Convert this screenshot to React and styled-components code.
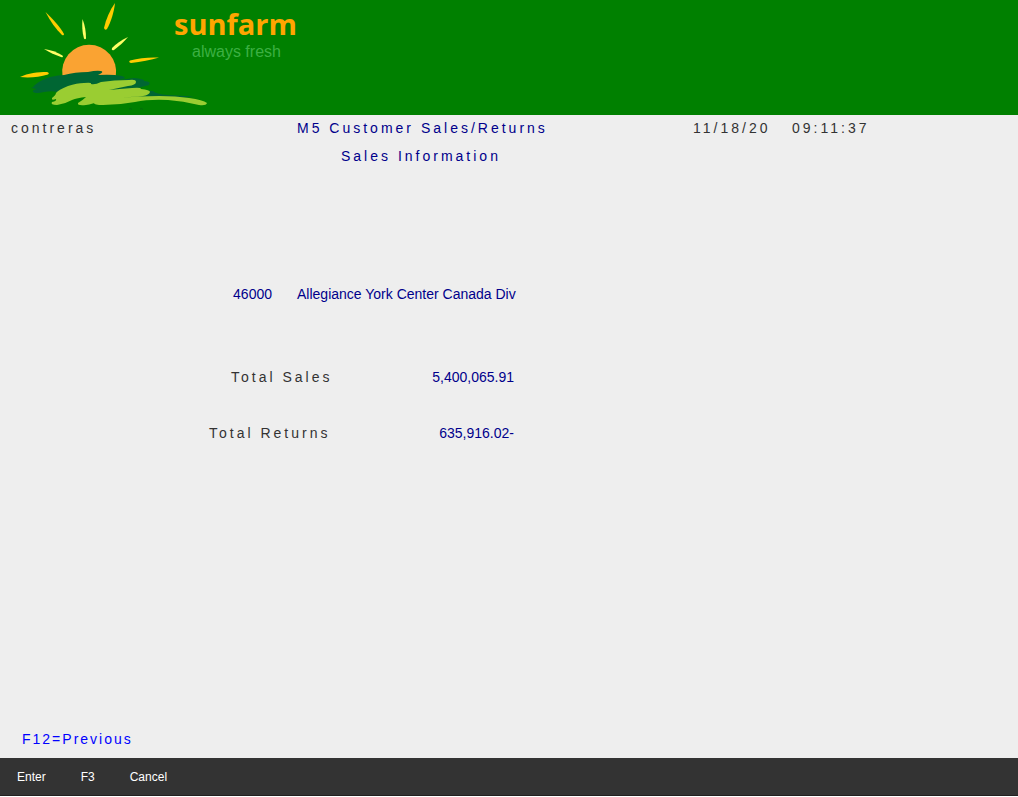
import React from "react";
import styled, { createGlobalStyle } from "styled-components";

const GlobalStyle = createGlobalStyle`
  * { box-sizing: border-box; }
  body {
    margin: 0;
    background: #ffffff;
    font-family: "Liberation Sans", Arial, sans-serif;
    font-size: 14px;
    line-height: 26px;
  }
`;

const Page = styled.div`
  min-height: calc(100vh - 1px);
  background: #eeeeee;
  display: flex;
  flex-direction: column;
`;

const Banner = styled.header`
  height: 115px;
  padding: 0 20px;
  background: #008000;
  display: flex;
  align-items: flex-start;
`;

const SunLogo = styled.svg`
  width: 190px;
  height: 115px;
  flex: none;
`;

const Brand = styled.div`
  margin-left: -36px;
  padding-top: 4px;
`;

const BrandName = styled.div`
  color: #ffa500;
  font-family: "Open Sans", sans-serif;
  font-size: 29px;
  font-weight: 700;
  line-height: 40px;
`;

const Tagline = styled.div`
  padding-left: 18px;
  color: #3cb043;
  font-size: 16px;
  line-height: 16px;
`;

const Screen = styled.main`
  flex: 1;
  display: flex;
  flex-direction: column;
  padding-bottom: 5px;
`;

const Line = styled.div`
  display: grid;
  grid-template-columns: repeat(auto-fill, 11px);
  height: 28px;
  margin-top: ${(p) => p.$before || 0}px;
  white-space: nowrap;
`;

const Field = styled.span`
  grid-column: ${(p) => p.$col} / span ${(p) => p.$span};
  color: ${(p) => p.$color || "#333333"};
`;

const Caption = styled(Field)`
  letter-spacing: 3px;
`;

const Heading = styled(Caption).attrs({ as: "h1" })`
  margin: 0;
  font-size: inherit;
  font-weight: 400;
`;

const Amount = styled(Field)`
  padding-right: 3px;
  text-align: right;
`;

const PromptLine = styled(Line)`
  margin-top: auto;
`;

const PromptButton = styled.button`
  grid-column: 3 / span 12;
  padding: 0;
  border: 0;
  background: none;
  color: #0000ff;
  font: inherit;
  letter-spacing: 2px;
  text-align: left;
  cursor: pointer;
`;

const KeyBar = styled.footer`
  height: 38px;
  padding: 0 17px;
  background: #333333;
  border-bottom: 1px solid #231f20;
  display: flex;
  align-items: center;
  gap: 35px;
`;

const KeyButton = styled.button`
  padding: 0;
  border: 0;
  background: none;
  color: #ffffff;
  font: inherit;
  font-size: 12px;
  cursor: pointer;
`;

const navy = "#00008b";

function Logo() {
  return (
    <SunLogo viewBox="20 0 190 115" role="img" aria-label="Sun rising over fields">
      <g fill="#ffcc00">
        <path d="M45.500 12C53 19 60 27 64 34Q64 36 62 35C56 29 50 21 45.500 12Z" />
        <path d="M115 3C114 12 111 22 107 29Q105 31 104 28C106 19 110 10 115 3Z" />
        <path d="M20 77C28 73 38 72 47 72Q50 73 48 74.500C39 77 30 78 20 77Z" />
        <path d="M159 57.500C149 57 139 58 130 60.500Q128 62 131 63C141 62 151 60 159 57.500Z" />
      </g>
      <g fill="#ffff66">
        <path d="M82.500 19C85 25 86 32 86 38.500Q85 40 84 38.500C82 32 82 25 82.500 19Z" />
        <path d="M44 49C51 50 57 52 62.500 55.500Q64 58 61 57C55 55 49 52 44 49Z" />
        <path d="M128 37C121 40 116 44 112 48Q111 51 114 50C119 46 124 42 128 37Z" />
      </g>
      <path d="M62.500 76A27 27 0 1 1 115.800 76Z" fill="#faa332" />
      <path
        d="M31 88Q38 85 33 86.500Q40 80 50 77Q59 75 64 75Q75 72 88 72Q97 70 101 71Q104 72 100 74L98 75Q112 74 122 76Q128 78 122 79L119 80L134 78Q145 79 144 81Q152 82 149 84Q151 85 145 86L138 88Q142 91 153 91Q156 94 168 95L194 96.500Q180 98 166 97L105 99L65 94Q56 90 44 92Q36 94 33 92Q32 90 37 89Z"
        fill="#006633"
      />
      <path
        d="M52 98Q56 95 56 93Q58 90 68 86Q77 83 84 83Q92 82 91 84Q95 85 101 82Q114 80 129 80Q136 79 136 82Q136 85 128 86L109 90Q119 89 132 88Q141 87 141 89Q150 90 150 92Q149 95 143 96L118 98Q138 96 159 96Q176 96 189 98Q203 100 207 103Q206 106 199 105Q183 101 168 100Q149 99 135 102Q119 105 103 105Q94 105 94 103Q95 101 101 101Q92 104 86 105Q77 106 78 103Q83 100 86 97Q77 98 72 100Q65 104 57 105Q50 105 52 102Q57 101 56 99Q51 101 52 98Z"
        fill="#9acd32"
      />
      <path d="M129 109Q131 108 132 109.500M140 109Q142 108 143 109.500" fill="none" stroke="#046a10" />
    </SunLogo>
  );
}

export default function App() {
  return (
    <Page>
      <GlobalStyle />
      <Banner>
        <Logo />
        <Brand>
          <BrandName>sunfarm</BrandName>
          <Tagline>always fresh</Tagline>
        </Brand>
      </Banner>
      <Screen>
        <Line>
          <Caption $col={2} $span={10}>contreras</Caption>
          <Heading $col={28} $span={30} $color={navy}>M5 Customer Sales/Returns</Heading>
          <Caption $col={64} $span={8}>11/18/20</Caption>
          <Caption $col={73} $span={8}>09:11:37</Caption>
        </Line>
        <Line>
          <Caption $col={32} $span={20} $color={navy}>Sales Information</Caption>
        </Line>
        <Line $before={110}>
          <Amount $col={20} $span={6} $color={navy}>46000</Amount>
          <Field $col={28} $span={30} $color={navy}>Allegiance York Center Canada Div</Field>
        </Line>
        <Line $before={55}>
          <Caption $col={22} $span={12}>Total Sales</Caption>
          <Amount $col={35} $span={13} $color={navy}>5,400,065.91</Amount>
        </Line>
        <Line $before={28}>
          <Caption $col={20} $span={14}>Total Returns</Caption>
          <Amount $col={35} $span={13} $color={navy}>635,916.02-</Amount>
        </Line>
        <PromptLine>
          <PromptButton type="button">F12=Previous</PromptButton>
        </PromptLine>
      </Screen>
      <KeyBar>
        <KeyButton type="button">Enter</KeyButton>
        <KeyButton type="button">F3</KeyButton>
        <KeyButton type="button">Cancel</KeyButton>
      </KeyBar>
    </Page>
  );
}
